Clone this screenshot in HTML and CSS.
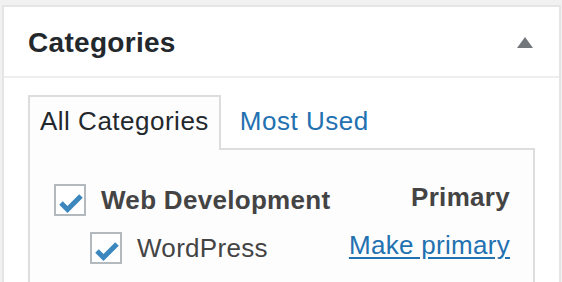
FILE: index.html
```html
<!DOCTYPE html>
<html>
<head>
<meta name="viewport" content="width=device-width, initial-scale=1">
<link rel="stylesheet" href="styles.css">
</head>
<body>

<div class="postbox">
  <div class="postbox-header">
    <h2 class="hndle">Categories</h2>
    <span class="toggle-arrow"></span>
  </div>

  <div class="inside">
    <ul class="category-tabs">
      <li class="tabs">All Categories</li>
      <li><a href="#">Most Used</a></li>
    </ul>

    <div class="tabs-panel">
      <ul class="categorychecklist">
        <li>
          <div class="cat-row">
            <label class="cat-label bold">
              <span class="checkbox">
                <svg width="28" height="28" viewBox="2 2 28 28"><polyline points="7,19 13.5,25.5 27,12" fill="none" stroke="#3d87bf" stroke-width="5"/></svg>
              </span>
              Web Development
            </label>
            <span class="primary-label">Primary</span>
          </div>
          <ul class="children">
            <li>
              <div class="cat-row">
                <label class="cat-label">
                  <span class="checkbox">
                    <svg width="28" height="28" viewBox="2 2 28 28"><polyline points="7,19 13.5,25.5 27,12" fill="none" stroke="#3d87bf" stroke-width="5"/></svg>
                  </span>
                  WordPress
                </label>
                <a href="#" class="make-primary">Make primary</a>
              </div>
            </li>
          </ul>
        </li>
      </ul>
    </div>
  </div>
</div>

</body>
</html>
```

FILE: styles.css
```css
* {
  box-sizing: border-box;
}

body {
  margin: 0;
  padding-top: 5px;
  background-color: #f1f1f1;
  font-family: "Liberation Sans", Arial, sans-serif;
  color: #32373c;
  letter-spacing: 0.3px;
}

ul {
  list-style: none;
  margin: 0;
  padding: 0;
}

a {
  color: #2271b1;
  text-decoration: none;
}

.postbox {
  margin-left: 2px;
  width: 559px;
  height: 290px;
  background-color: #fff;
  border: 2px solid #e5e5e5;
  overflow: hidden;
}

.postbox-header {
  display: flex;
  align-items: center;
  justify-content: space-between;
  padding: 16px 24px 14px 24px;
  border-bottom: 2px solid #eee;
}

.hndle {
  margin: 0;
  font-size: 28px;
  line-height: 39px;
  font-weight: bold;
  color: #23282d;
}

.toggle-arrow {
  width: 0;
  height: 0;
  margin-right: 2px;
  border-left: 8px solid transparent;
  border-right: 8px solid transparent;
  border-bottom: 11px solid #72777c;
}

.inside {
  padding: 17px 24px 0 24px;
}

.category-tabs {
  display: flex;
  font-size: 26px;
  line-height: 30px;
  letter-spacing: 0.5px;
}

.category-tabs li {
  position: relative;
  padding: 9px 10px 14px 10px;
  border: 2px solid transparent;
  border-bottom: none;
  margin-bottom: -2px;
}

.category-tabs li + li {
  margin-left: 7px;
}

.category-tabs .tabs {
  background-color: #fdfdfd;
  border-color: #ddd;
  color: #23282d;
}

.tabs-panel {
  height: 200px;
  padding: 34px 23px 0 24px;
  background-color: #fdfdfd;
  border: 2px solid #ddd;
}

.categorychecklist {
  font-size: 26px;
  line-height: 30px;
  color: #444;
}

.cat-row {
  display: flex;
  align-items: center;
  height: 32px;
}

.cat-label {
  display: flex;
  align-items: center;
  gap: 15px;
}

.bold {
  font-weight: bold;
}

.checkbox {
  width: 32px;
  height: 32px;
  background-color: #fff;
  border: 2px solid #b4b9be;
  display: flex;
  align-items: center;
  justify-content: center;
}

.checkbox svg {
  flex: none;
}

.primary-label,
.make-primary {
  margin-left: auto;
  align-self: flex-start;
  line-height: 26px;
}

.primary-label {
  font-weight: bold;
}

.make-primary {
  text-decoration: underline;
  text-underline-offset: 3px;
}

.children {
  margin: 16px 0 0 36px;
}
```
